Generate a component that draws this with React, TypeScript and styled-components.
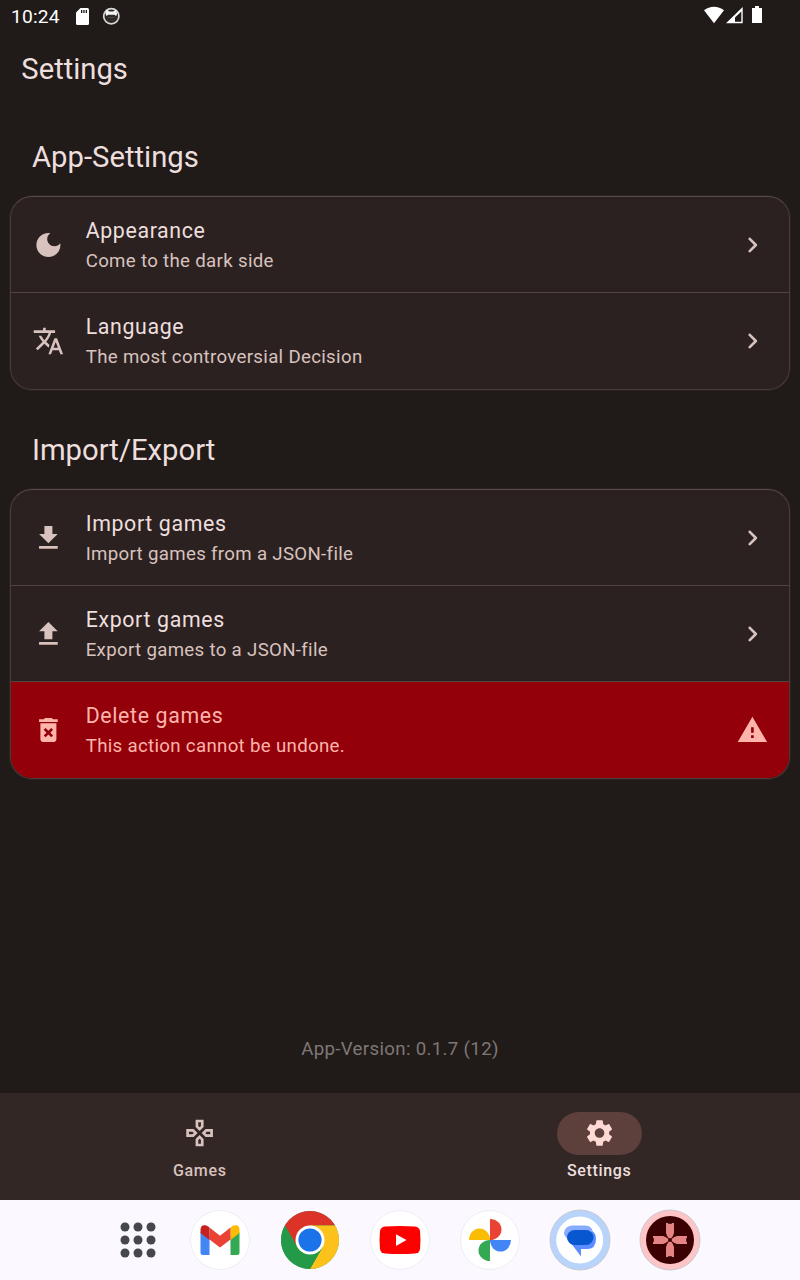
import React from "react";
import styled, { createGlobalStyle, css } from "styled-components";

const colors = {
  background: "#201a18",
  card: "#2c2121",
  outline: "#534341",
  text: "#eddfdd",
  muted: "#d8c2be",
  danger: "#930009",
  onDanger: "#ffb4ab",
  nav: "#332725",
};

const GlobalStyle = createGlobalStyle`
  * { box-sizing: border-box; }
  body { margin: 0; background: ${colors.background}; }
`;

const Screen = styled.div`
  display: flex;
  flex-direction: column;
  width: 800px;
  height: 1280px;
  overflow: hidden;
  background: ${colors.background};
  color: ${colors.text};
  font-family: Roboto, sans-serif;
`;

const StatusBar = styled.header`
  display: flex;
  align-items: center;
  flex: none;
  height: 32px;
  padding: 0 37px 0 11px;
  color: #fff;
`;

const Clock = styled.span`
  width: 65px;
  font-size: 19.2px;
  line-height: 32px;
  letter-spacing: 0.2px;
  padding-top: 1px;
`;

const StatusGroup = styled.div<{ $end?: boolean }>`
  display: flex;
  align-items: center;
  ${(p) => p.$end && css`margin-left: auto;`}
  svg { display: block; }
`;

const TitleBar = styled.div`
  flex: none;
  height: 75px;
  padding: 17px 21.33px 0;
`;

const PageTitle = styled.h1`
  margin: 0;
  font-size: 29.2px;
  font-weight: 400;
  line-height: 40px;
`;

const Content = styled.main`
  flex: 1;
  display: flex;
  flex-direction: column;
  padding: 0 10px;
`;

const Section = styled.section`
  margin-top: 30px;
  & + & { margin-top: 40px; }
`;

const SectionTitle = styled.h2`
  margin: 0 0 19px;
  padding-left: 22px;
  font-size: 29.25px;
  font-weight: 400;
  line-height: 40px;
`;

const Card = styled.div`
  overflow: hidden;
  border: 1px solid #483b39;
  border-top-color: #5a4a48;
  border-radius: 22px;
  background: ${colors.card};
  box-shadow: 0 0 0 1px #2a2321;
`;

const Row = styled.div<{ $danger?: boolean }>`
  display: flex;
  align-items: center;
  height: 96px;
  padding: 0 21px 0 21.3px;
  background: ${(p) => (p.$danger ? colors.danger : "transparent")};
  color: ${(p) => (p.$danger ? colors.onDanger : colors.muted)};
  &:first-child { height: 95px; }
  &:last-child { height: 97px; padding-bottom: 1px; }
  & + & { border-top: 1px solid ${colors.outline}; }
  svg { display: block; flex: none; }
`;

const RowText = styled.div`
  flex: 1;
  padding-left: 21.4px;
`;

const RowTitle = styled.div<{ $danger?: boolean }>`
  font-size: 21.33px;
  line-height: 32px;
  letter-spacing: 0.64px;
  color: ${(p) => (p.$danger ? colors.onDanger : colors.text)};
`;

const RowHint = styled.div`
  font-size: 18.67px;
  line-height: 28px;
  letter-spacing: 0.32px;
`;

const Version = styled.footer`
  margin-top: auto;
  padding-bottom: 30px;
  text-align: center;
  color: #7f7775;
  font-size: 18.67px;
  line-height: 28px;
  letter-spacing: 0.33px;
`;

const NavBar = styled.nav`
  display: flex;
  flex: none;
  height: 107px;
  padding: 19px 1px 0 0;
  background: ${colors.nav};
`;

const NavItem = styled.div<{ $active?: boolean }>`
  flex: 1;
  display: flex;
  flex-direction: column;
  align-items: center;
  color: ${(p) => (p.$active ? colors.text : colors.muted)};
`;

const NavPill = styled.div<{ $active?: boolean }>`
  display: flex;
  align-items: flex-start;
  justify-content: center;
  width: 85px;
  height: 43px;
  padding-top: 5px;
  border-radius: 22px;
  background: ${(p) => (p.$active ? "#5d3f3b" : "transparent")};
  color: ${(p) => (p.$active ? "#ffdad5" : colors.muted)};
`;

const NavLabel = styled.span`
  margin-top: 5px;
  font-size: 16px;
  font-weight: 500;
  line-height: 21px;
  letter-spacing: 0.67px;
`;

const Taskbar = styled.div`
  display: flex;
  align-items: center;
  justify-content: center;
  flex: none;
  gap: 26px;
  height: 80px;
  padding-left: 22px;
  background: #fbf8ff;
  svg { display: block; }
`;

const Launcher = styled.svg`
  margin-right: 6px;
`;

const paths = {
  moon: "M12 3c-4.97 0-9 4.03-9 9s4.03 9 9 9 9-4.03 9-9c0-.46-.04-.92-.1-1.36-.98 1.37-2.58 2.26-4.4 2.26-2.98 0-5.4-2.42-5.4-5.4 0-1.81.89-3.42 2.26-4.4C12.92 3.04 12.46 3 12 3z",
  translate:
    "M12.87 15.07l-2.54-2.51.03-.03c1.74-1.94 2.98-4.17 3.71-6.53H17V4h-7V2H8v2H1v1.99h11.17C11.5 7.92 10.44 9.75 9 11.35 8.07 10.32 7.3 9.19 6.69 8h-2c.73 1.63 1.73 3.17 2.98 4.56l-5.09 5.02L4 19l5-5 3.11 3.11.76-2.04zM18.5 10h-2L12 22h2l1.12-3h4.75L21 22h2l-4.5-12zm-2.62 7l1.62-4.33L19.12 17h-3.24z",
  download: "M19 9h-4V3H9v6H5l7 7 7-7zM5 18v2h14v-2H5z",
  upload: "M9 16h6v-6h4l-7-7-7 7h4zm-4 2h14v2H5z",
  trash:
    "M6 19c0 1.1.9 2 2 2h8c1.1 0 2-.9 2-2V7H6v12zm2.46-7.12l1.41-1.41L12 12.59l2.12-2.12 1.41 1.41L13.41 14l2.12 2.12-1.41 1.41L12 15.41l-2.12 2.12-1.41-1.41L10.59 14l-2.13-2.12zM15.5 4l-1-1h-5l-1 1H5v2h14V4z",
  warning: "M1 21h22L12 2 1 21zm12-3h-2v-2h2v2zm0-4h-2v-4h2v4z",
  chevron:
    "M9.29 6.71c-.39.39-.39 1.02 0 1.41L13.17 12l-3.88 3.88c-.39.39-.39 1.02 0 1.41.39.39 1.02.39 1.41 0l4.59-4.59c.39-.39.39-1.02 0-1.41L10.7 6.7c-.38-.38-1.02-.38-1.41.01z",
  gamepad:
    "M13 4v2.67l-1 1-1-1V4h2m7 7v2h-2.67l-1-1 1-1H20M6.67 11l1 1-1 1H4v-2h2.67M12 16.33l1 1V20h-2v-2.67l1-1M15 2H9v5.5l3 3 3-3V2zm7 7h-5.5l-3 3 3 3H22V9zM7.5 9H2v6h5.5l3-3-3-3zm4.5 4.5l-3 3V22h6v-5.5l-3-3z",
  gear: "M19.14 12.94c.04-.3.06-.61.06-.94 0-.32-.02-.64-.07-.94l2.03-1.58c.18-.14.23-.41.12-.61l-1.92-3.32c-.12-.22-.37-.29-.59-.22l-2.39.96c-.5-.38-1.03-.7-1.62-.94l-.36-2.54c-.04-.24-.24-.41-.48-.41h-3.84c-.24 0-.43.17-.47.41l-.36 2.54c-.59.24-1.13.57-1.62.94l-2.39-.96c-.22-.08-.47 0-.59.22L2.74 8.87c-.12.21-.08.47.12.61l2.03 1.58c-.05.3-.09.63-.09.94s.02.64.07.94l-2.03 1.58c-.18.14-.23.41-.12.61l1.92 3.32c.12.22.37.29.59.22l2.39-.96c.5.38 1.03.7 1.62.94l.36 2.54c.05.24.24.41.48.41h3.84c.24 0 .44-.17.47-.41l.36-2.54c.59-.24 1.13-.56 1.62-.94l2.39.96c.22.08.47 0 .59-.22l1.92-3.32c.12-.22.07-.47-.12-.61l-2.01-1.58zM12 15.6c-1.98 0-3.6-1.62-3.6-3.6s1.62-3.6 3.6-3.6 3.6 1.62 3.6 3.6-1.62 3.6-3.6 3.6z",
};

const Icon = ({ name, shift = -0.3 }: { name: keyof typeof paths; shift?: number }) => (
  <svg width="32" height="32" viewBox={`${shift} 0 24 24`} fill="currentColor">
    <path d={paths[name]} />
  </svg>
);

type SettingProps = {
  icon: keyof typeof paths;
  title: string;
  hint: string;
  danger?: boolean;
};

const Setting = ({ icon, title, hint, danger }: SettingProps) => (
  <Row $danger={danger}>
    <Icon name={icon} />
    <RowText>
      <RowTitle $danger={danger}>{title}</RowTitle>
      <RowHint>{hint}</RowHint>
    </RowText>
    <Icon name={danger ? "warning" : "chevron"} />
  </Row>
);

const StatusIcons = () => (
  <StatusGroup>
    <svg width="46" height="32" viewBox="76 0 46 32">
      <path d="M80.5 8H87.500q1.500 0 1.500 1.500V23.500q0 1.500-1.500 1.500H77.500q-1.500 0-1.500-1.500V12.500z" fill="#fff" />
      <path d="M81 10h1.300v3H81zM83.300 10h1.300v3h-1.300zM85.700 10H87v3h-1.300z" fill={colors.background} />
      <circle cx="111.300" cy="16.300" r="7.600" fill="#302b29" stroke="#d9d7d6" strokeWidth="1.700" />
      <path d="M105.500 13.500L106.500 9.500 109.500 11.500h3.600l3-2 1 4-.8 2.500-2-1.200h-6l-2 1.200z" fill="#f5f5f5" />
      <path d="M108 17.500h6.500" stroke="#4c4745" />
    </svg>
  </StatusGroup>
);

const SignalIcons = () => (
  <StatusGroup $end>
    <svg width="60" height="32" viewBox="703 0 60 32">
      <path d="M714 23.300L704 10.300Q708.500 6.700 714 6.700T724 10.300z" fill="#fff" />
      <path d="M742.700 7v16.300H726z" fill="#fff" />
      <path d="M741.300 11.500v10.300H735V17.500z" fill={colors.background} />
      <path d="M755 6h4v2h3v15h-10V8h3z" fill="#fff" />
    </svg>
  </StatusGroup>
);

const AppIcon = ({
  children,
  fill = "#fff",
  ring = "#f0edf4",
  radius = 29.5,
}: {
  children: React.ReactNode;
  fill?: string;
  ring?: string;
  radius?: number;
}) => (
  <svg width="64" height="64" viewBox="-32 -32 64 64">
    <circle r={radius} fill={fill} stroke={ring} />
    {children}
  </svg>
);

export default function App() {
  return (
    <Screen>
      <GlobalStyle />
      <StatusBar>
        <Clock>10:24</Clock>
        <StatusIcons />
        <SignalIcons />
      </StatusBar>
      <TitleBar>
        <PageTitle>Settings</PageTitle>
      </TitleBar>
      <Content>
        <Section>
          <SectionTitle>App-Settings</SectionTitle>
          <Card>
            <Setting icon="moon" title="Appearance" hint="Come to the dark side" />
            <Setting icon="translate" title="Language" hint="The most controversial Decision" />
          </Card>
        </Section>
        <Section>
          <SectionTitle>Import/Export</SectionTitle>
          <Card>
            <Setting icon="download" title="Import games" hint="Import games from a JSON-file" />
            <Setting icon="upload" title="Export games" hint="Export games to a JSON-file" />
            <Setting icon="trash" title="Delete games" hint="This action cannot be undone." danger />
          </Card>
        </Section>
        <Version>App-Version: 0.1.7 (12)</Version>
      </Content>
      <NavBar>
        <NavItem>
          <NavPill>
            <Icon name="gamepad" shift={0.3} />
          </NavPill>
          <NavLabel>Games</NavLabel>
        </NavItem>
        <NavItem $active>
          <NavPill $active>
            <Icon name="gear" shift={-0.4} />
          </NavPill>
          <NavLabel>Settings</NavLabel>
        </NavItem>
      </NavBar>
      <Taskbar>
        <Launcher width="36" height="36" viewBox="-18 -18 36 36" fill="#46464f">
          {[-13, 0, 13].map((y) =>
            [-13, 0, 13].map((x) => <circle key={`${x}${y}`} cx={x} cy={y} r="4.5" />)
          )}
        </Launcher>
        <AppIcon>
          <path d="M-19.500-8V12.500Q-19.500 15-17 15H-10.500V-4z" fill="#4285f4" />
          <path d="M19.500-8V12.500Q19.500 15 17 15H10.500V-4z" fill="#34a853" />
          <path d="M10.500-12.500Q13.500-15.500 16.500-14.700 19.500-14 19.500-10V-7L10.500 0z" fill="#fbbc04" />
          <path d="M-10.500-12.500L0-4.300 10.500-12.500V-.5L0 7.500-10.500-.5z" fill="#ea4335" />
          <path d="M-10.500-12.500Q-13.500-15.500-16.500-14.700-19.500-14-19.500-10V-7L-10.500 0z" fill="#c5221f" />
        </AppIcon>
        <svg width="64" height="64" viewBox="-32 -32 64 64">
          <circle r="29" fill="#34a853" />
          <path d="M-25.100-14.500A29 29 0 0 1 25.100-14.500H0L-12.600 7.250z" fill="#db3328" />
          <path d="M25.100-14.500A29 29 0 0 1 0 29L12.600 7.250 0-14.500z" fill="#fcc21b" />
          <path d="M-25.100-14.500A29 29 0 0 0 0 29L12.600 7.250H-12.600z" fill="#249a48" />
          <circle r="14.500" fill="#fff" />
          <circle r="11.600" fill="#1a73e8" />
        </svg>
        <AppIcon>
          <path d="M-15-13.500Q0-14.600 15-13.500 19.500-13 20-9 21 0 20 9 19.500 13 15 13.600 0 14.600-15 13.600-19.500 13-20 9-21 0-20-9-19.500-13-15-13.500z" fill="#f00" />
          <path d="M-4-5.800L6.500 0-4 6z" fill="#fff" />
        </AppIcon>
        <AppIcon>
          <path d="M0 0V-21A11.500 10.500 0 0 1 0 0z" fill="#ea4335" />
          <path d="M21 0A10.500 11.500 0 0 1 0 0z" fill="#4285f4" />
          <path d="M0 21A11.500 10.500 0 0 1 0 0z" fill="#34a853" />
          <path d="M-21 0A10.500 11.500 0 0 1 0 0z" fill="#fbbc04" />
        </AppIcon>
        <AppIcon fill="#b8d4fb" ring="#c9cad2" radius={30}>
          <circle cx="-0.3" r="23.500" fill="#fff" />
          <path d="M-7-14.500H5Q13-14.500 13-6H-7L-12-1Q-16-4-16-7-15-14.500-7-14.500z" fill="#87abff" />
          <path d="M-13-2L1 16.500V9H7Q16 9 16-1 16-7 12-9L8 4H-9z" fill="#5b8dff" />
          <rect x="-13" y="-10" width="26.500" height="15" rx="7.500" fill="#0957d0" />
        </AppIcon>
        <AppIcon fill="#ffc4c6" ring="#c9cad2" radius={30}>
          <circle r="24" fill="#3b0002" />
          {[0, 90, 180, 270].map((a) => (
            <path key={a} transform={`rotate(${a})`} d="M-4-17H-2V-16.200H2V-17H4V-7Q3.500-4.500 1.300-1.800H-1.300Q-3.500-4.500-4-7z" fill="#e58485" />
          ))}
        </AppIcon>
      </Taskbar>
    </Screen>
  );
}
